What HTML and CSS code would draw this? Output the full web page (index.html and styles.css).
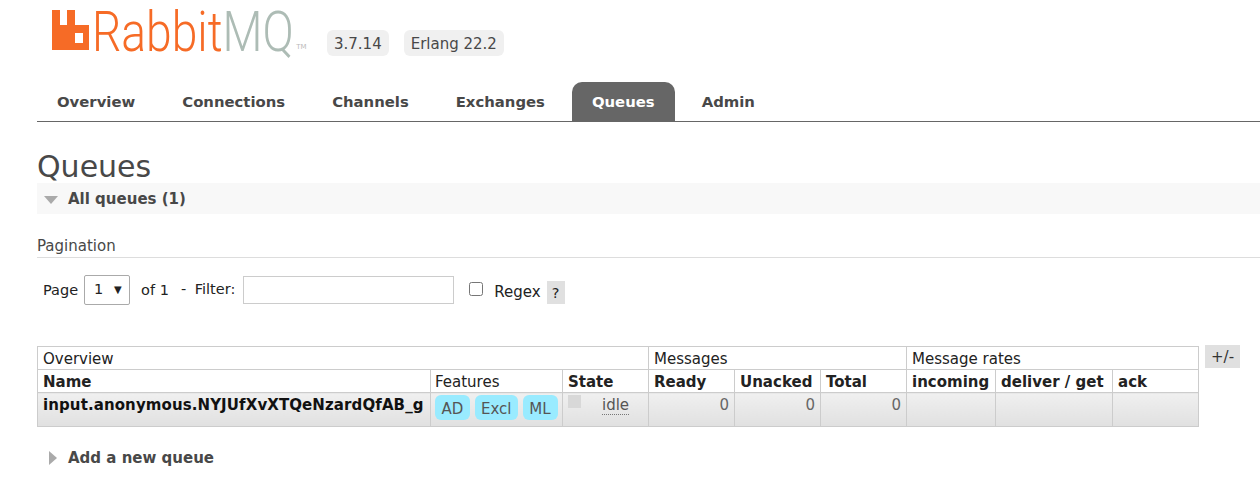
FILE: index.html
```html
<!DOCTYPE html>
<html>
<head>
<title>RabbitMQ Management</title>
<link rel="stylesheet" href="styles.css">
</head>
<body>
<div class="header">
  <div class="logo">
    <svg class="logo-mark" width="37" height="42" viewBox="0 0 37 42">
      <path fill="#f66b26" fill-rule="evenodd" d="M0 1H8V16H15V1H23V16H37V41H0ZM23 24V34H31V24Z"/>
    </svg>
    <span class="logo-text"><span class="rabbit">Rabbit</span><span class="mq">MQ</span></span>
    <span class="tm">TM</span>
  </div>
  <span class="version">3.7.14</span>
  <span class="version">Erlang 22.2</span>
</div>

<div class="tabs">
  <a>Overview</a>
  <a>Connections</a>
  <a>Channels</a>
  <a>Exchanges</a>
  <a class="active">Queues</a>
  <a>Admin</a>
</div>

<h1>Queues</h1>

<div class="section-head">
  <span class="arrow-down"></span>
  <span>All queues (1)</span>
</div>

<h3>Pagination</h3>

<div class="filter-row">
  <span class="lbl-page">Page</span>
  <span class="select">1 <span class="caret">▼</span></span>
  <span class="lbl-of">of 1</span>
  <span class="lbl-filter">- Filter:</span>
  <input type="text" class="filter-input">
  <input type="checkbox" class="regex-check">
  <span class="lbl-regex">Regex</span>
  <span class="help">?</span>
</div>

<div class="table-row">
  <table class="queues">
    <colgroup>
      <col class="c-name"><col class="c-features"><col class="c-state">
      <col class="c-num"><col class="c-num"><col class="c-num">
      <col class="c-in"><col class="c-deliver"><col class="c-ack">
    </colgroup>
    <tr class="group">
      <th colspan="3">Overview</th>
      <th colspan="3">Messages</th>
      <th colspan="3">Message rates</th>
    </tr>
    <tr class="cols">
      <th>Name</th>
      <th class="plain">Features</th>
      <th>State</th>
      <th>Ready</th>
      <th>Unacked</th>
      <th>Total</th>
      <th>incoming</th>
      <th>deliver / get</th>
      <th>ack</th>
    </tr>
    <tr class="data">
      <td class="name">input.anonymous.NYJUfXvXTQeNzardQfAB_g</td>
      <td class="features">
        <div class="tag-list"><span class="tag">AD</span><span class="tag">Excl</span><span class="tag">ML</span></div>
      </td>
      <td class="state"><span class="state-box"></span><abbr>idle</abbr></td>
      <td class="r">0</td>
      <td class="r">0</td>
      <td class="r">0</td>
      <td></td>
      <td></td>
      <td></td>
    </tr>
  </table>
  <span class="plus-minus">+/-</span>
</div>

<div class="section-closed">
  <span class="arrow-right"></span>
  <span>Add a new queue</span>
</div>
</body>
</html>
```

FILE: styles.css
```css
html, body {
  overflow: hidden;
}
body {
  margin: 0;
  height: 486px;
  font-family: "DejaVu Sans", Verdana, sans-serif;
  font-size: 15px;
  color: #484848;
  background: #fff;
}

/* logo and version badges */
.header {
  height: 82px;
  padding-left: 52px;
  display: flex;
  align-items: flex-start;
}
.logo {
  width: 275px;
  height: 60px;
  display: flex;
  align-items: flex-start;
}
.logo-mark {
  margin-top: 9px;
  flex: none;
}
.logo-text {
  font-family: Roboto, "Liberation Sans", sans-serif;
  font-weight: 300;
  font-size: 55px;
  line-height: 60px;
  margin: 2px 0 0 3px;
  flex: none;
  transform: scaleX(0.84);
  transform-origin: left top;
}
.rabbit {
  color: #f66b26;
}
.mq {
  color: #adbcb5;
}
.tm {
  flex: none;
  font-size: 7px;
  color: #bbb;
  margin-top: 43px;
  margin-left: -36px;
}
.version {
  margin-top: 30px;
  margin-right: 15px;
  padding: 0 7px;
  height: 26px;
  line-height: 29px;
  background: #f0f0f0;
  border-radius: 6px;
}

/* main navigation */
.tabs {
  margin-left: 37px;
  height: 39px;
  display: flex;
  border-bottom: 1px solid #666;
}
.tabs a {
  padding: 2px 20px 0;
  margin-right: 7px;
  line-height: 37px;
  font-weight: bold;
  font-size: 14.85px;
  border-radius: 10px 10px 0 0;
}
.tabs a.active {
  background: #666;
  color: #fff;
}

h1 {
  margin: 28px 0 0 37px;
  font-size: 30px;
  font-weight: normal;
  line-height: 33px;
}

.section-head {
  margin: 0 0 0 37px;
  height: 31px;
  background: #f8f8f8;
  display: flex;
  align-items: center;
  font-weight: bold;
}
.arrow-down {
  width: 0;
  height: 0;
  margin: 2px 10px 0 7px;
  border-left: 7px solid transparent;
  border-right: 7px solid transparent;
  border-top: 8px solid #aaa;
}

h3 {
  margin: 23px 0 0 37px;
  height: 20px;
  font-size: 15px;
  font-weight: normal;
  line-height: 19px;
  border-bottom: 1px solid #ddd;
}

/* paging and filter controls */
.filter-row {
  margin-top: 17px;
  height: 30px;
  display: flex;
  align-items: center;
  color: #222;
  font-size: 14.5px;
}
.lbl-page {
  margin-left: 43px;
}
.select {
  box-sizing: border-box;
  width: 46px;
  height: 30px;
  margin-left: 6px;
  padding-left: 9px;
  border: 1px solid #aaa;
  border-radius: 2px;
  line-height: 27px;
}
.caret {
  font-size: 10px;
  margin-left: 6px;
  vertical-align: 1px;
}
.lbl-of {
  margin-left: 11px;
}
.lbl-filter {
  margin-left: 12px;
  margin-top: -3px;
  word-spacing: 4px;
}
.filter-input {
  box-sizing: border-box;
  width: 211px;
  height: 28px;
  margin: 0 0 0 8px;
  border: 1px solid #ccc;
}
.regex-check {
  width: 14px;
  height: 14px;
  margin: -3px 0 0 15px;
}
.lbl-regex {
  margin-left: 11px;
  margin-top: 4px;
  font-size: 15px;
}
.help {
  width: 18px;
  height: 23px;
  margin: 4px 0 0 6px;
  background: #e0e0e0;
  text-align: center;
  line-height: 24px;
}

/* queue table */
.table-row {
  margin: 41px 0 0 37px;
  display: flex;
  align-items: flex-start;
}
.queues {
  border-collapse: collapse;
  table-layout: fixed;
  width: 1162px;
  color: #222;
  font-size: 15px;
}
.c-name { width: 393px; }
.c-features { width: 132px; }
.c-state { width: 86px; }
.c-num { width: 86px; }
.c-in { width: 89px; }
.c-deliver { width: 117px; }
.c-ack { width: 86px; }
.queues th, .queues td {
  border: 1px solid #ccc;
  padding: 0 5px;
  text-align: left;
  white-space: nowrap;
  overflow: hidden;
}
.queues th {
  height: 20px;
  padding-top: 2px;
  line-height: 20px;
}
.group th {
  font-weight: normal;
}
.cols th.plain {
  font-weight: normal;
  padding-left: 4px;
}
.data td {
  height: 33px;
  vertical-align: top;
  line-height: 24px;
  background: linear-gradient(#f0f0f0, #e0e0e0);
}
.queues td.name {
  font-weight: bold;
  letter-spacing: 0.1px;
  color: #111;
}
.queues td.r {
  text-align: right;
  color: #666;
}
.queues td.features {
  padding: 0 0 0 4px;
}
.tag-list {
  display: flex;
  gap: 5px;
  margin-top: 2px;
}
.tag {
  min-width: 23px;
  height: 25px;
  line-height: 28px;
  padding: 0 6px;
  text-align: center;
  background: #99ebff;
  border-radius: 6px;
  color: #555;
}
.queues td.state {
  color: #555;
}
.state-box {
  display: inline-block;
  width: 13px;
  height: 13px;
  background: #d8d8d8;
  margin: 0 21px 0 0;
  vertical-align: 2px;
}
abbr {
  border-bottom: 1px dotted #777;
}
.plus-minus {
  width: 35px;
  height: 23px;
  margin: -1px 0 0 6px;
  background: #e0e0e0;
  text-align: center;
  line-height: 24px;
  color: #333;
}

.section-closed {
  margin: 22px 0 0 49px;
  display: flex;
  align-items: center;
  font-weight: bold;
}
.arrow-right {
  width: 0;
  height: 0;
  margin-right: 11px;
  border-top: 7px solid transparent;
  border-bottom: 7px solid transparent;
  border-left: 8px solid #aaa;
}
```
